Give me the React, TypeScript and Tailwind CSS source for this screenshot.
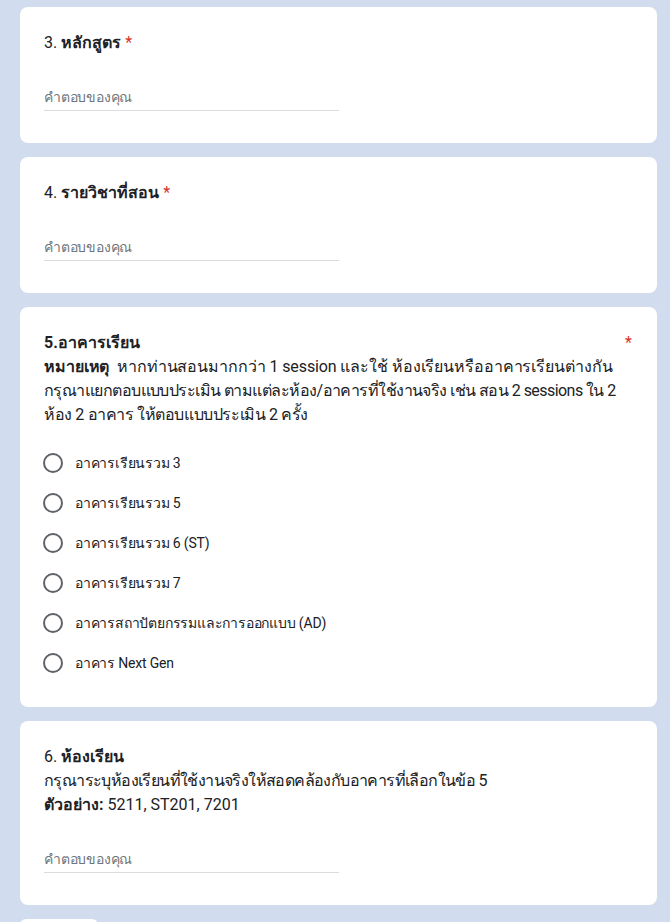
import React from 'react';

const font = { fontFamily: 'Roboto, "Noto Sans", "Liberation Sans", sans-serif' };

function Card({ children }: { children: React.ReactNode }) {
  return <div className="bg-white rounded-lg px-6 pt-6 pb-8">{children}</div>;
}

function Required() {
  return <span className="text-[#d93025] font-normal ml-1">*</span>;
}

function ShortAnswer() {
  return (
    <div className="mt-8 w-1/2 border-b border-[#dadce0] pb-[3px] text-[14px] leading-5 tracking-[-0.2px] text-[#70757a]">
      คำตอบของคุณ
    </div>
  );
}

function Radio({ label }: { label: string }) {
  return (
    <div className="flex items-center h-10">
      <div className="ml-[-1px] w-5 h-5 rounded-full border-2 border-[#5f6368] shrink-0" />
      <span className="ml-3 text-[14px] tracking-[-0.2px] text-[#202124]">{label}</span>
    </div>
  );
}

const options = [
  'อาคารเรียนรวม 3',
  'อาคารเรียนรวม 5',
  'อาคารเรียนรวม 6 (ST)',
  'อาคารเรียนรวม 7',
  'อาคารสถาปัตยกรรมและการออกแบบ (AD)',
  'อาคาร Next Gen',
];

export default function App() {
  return (
    <div className="h-[922px] overflow-hidden bg-[#d1dcee] pt-[7px] pl-[20px] pr-[13px]" style={font}>
      <div className="flex flex-col gap-[14px]">
        {/* Q3 */}
        <Card>
          <div className="text-[16px] leading-6 text-[#202124]">
            3. <span className="font-bold">หลักสูตร</span>
            <Required />
          </div>
          <ShortAnswer />
        </Card>

        {/* Q4 */}
        <Card>
          <div className="text-[16px] leading-6 text-[#202124]">
            4. <span className="font-bold">รายวิชาที่สอน</span>
            <Required />
          </div>
          <ShortAnswer />
        </Card>

        {/* Q5 */}
        <div className="bg-white rounded-lg px-6 pt-6 pb-6">
          <div className="flex text-[16px] leading-6 text-[#202124]">
            <div className="flex-1 min-w-0">
              <div className="font-bold">5.อาคารเรียน</div>
              <div className="whitespace-nowrap tracking-[-0.1px]">
                <span className="font-bold">หมายเหตุ</span>&nbsp; หากท่านสอนมากกว่า 1 session และใช้ ห้องเรียนหรืออาคารเรียนต่างกัน
              </div>
              <div className="whitespace-nowrap tracking-[-0.55px]">
                กรุณาแยกตอบแบบประเมิน ตามแต่ละห้อง/อาคารที่ใช้งานจริง เช่น สอน 2 sessions ใน 2
              </div>
              <div className="whitespace-nowrap tracking-[-0.4px]">ห้อง 2 อาคาร ให้ตอบแบบประเมิน 2 ครั้ง</div>
            </div>
            <span className="text-[#d93025] pr-[1px]">*</span>
          </div>
          <div className="mt-4 flex flex-col">
            {options.map((o) => (
              <Radio key={o} label={o} />
            ))}
          </div>
        </div>

        {/* Q6 */}
        <Card>
          <div className="text-[16px] leading-6 text-[#202124]">
            <div>
              6. <span className="font-bold">ห้องเรียน</span>
            </div>
            <div className="tracking-[-0.6px]">กรุณาระบุห้องเรียนที่ใช้งานจริงให้สอดคล้องกับอาคารที่เลือกในข้อ 5</div>
            <div>
              <span className="font-bold">ตัวอย่าง:</span> 5211, ST201, 7201
            </div>
          </div>
          <ShortAnswer />
        </Card>

        <div className="w-[78px] h-10 bg-white rounded-t-md shrink-0" />
      </div>
    </div>
  );
}
